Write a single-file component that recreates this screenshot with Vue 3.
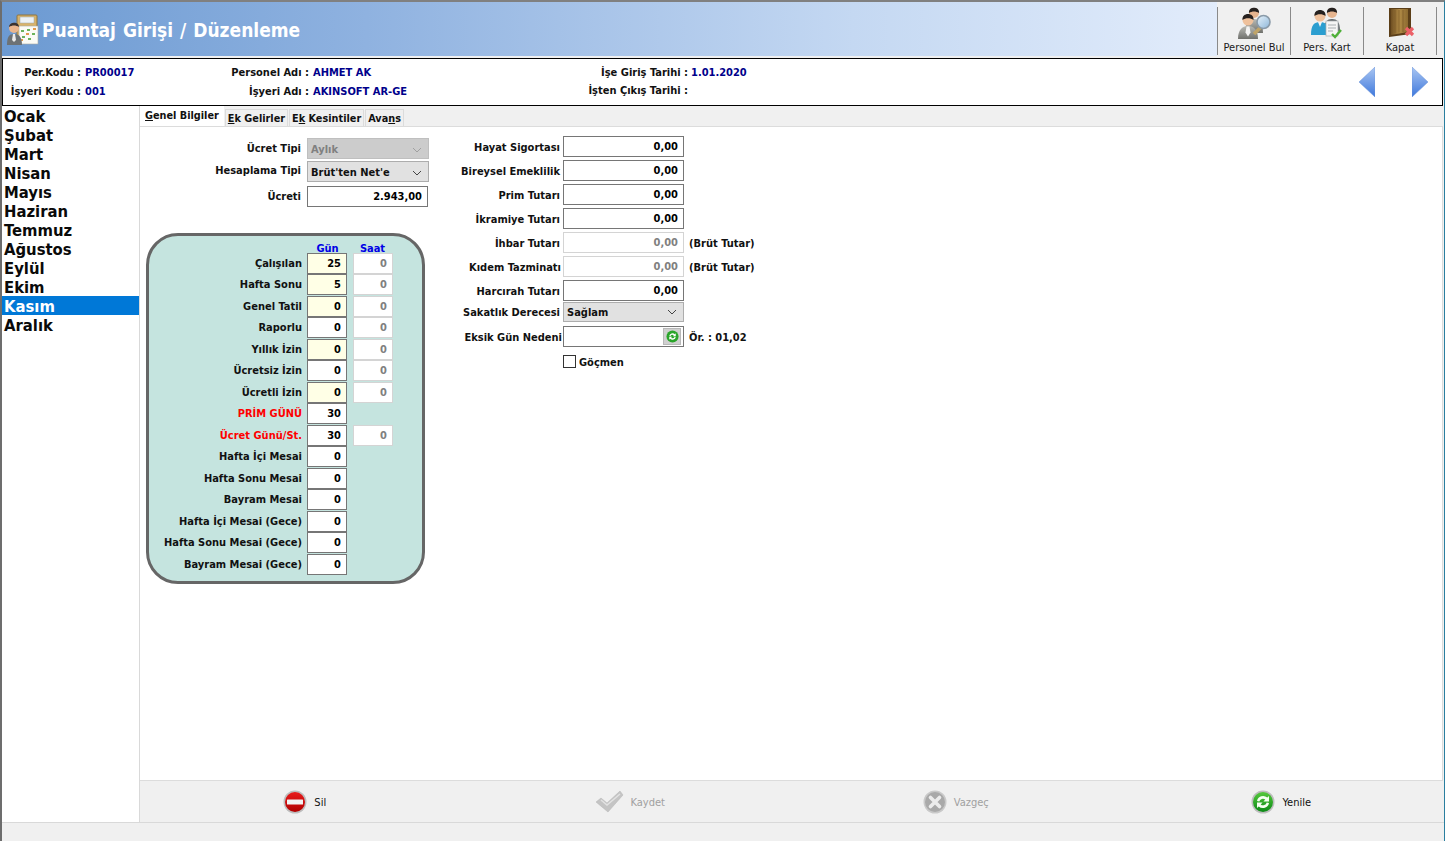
<template>
  <div class="window">
    <header class="titlebar">
      <div class="title-band">
        <svg class="title-icon" viewBox="0 0 32 32" width="32" height="32">
          <rect x="10" y="1" width="20" height="25" rx="1" fill="#d9b36a" stroke="#8d7440" />
          <rect x="13" y="3" width="14" height="6" fill="#eef2f5" stroke="#9aa6ad" stroke-width="0.5" />
          <rect x="12" y="12" width="19" height="18" fill="#fbfbf6" stroke="#a8a8a0" stroke-width="0.6" />
          <path d="M14 16h3v2h-3zM20 15h3v2h-3zM25 19h3v2h-3zM15 22h3v2h-3zM21 24h3v2h-3z" fill="#6cb35c" />
          <path d="M19 19h3v2h-3zM26 14h3v2h-3zM14 25h2v2h-2z" fill="#e39a4b" />
          <circle cx="7" cy="14" r="5" fill="#eab68e" />
          <path d="M2 13c0-5 10-6 10 0-3-2-7-2-10 0z" fill="#3a3230" />
          <path d="M0 31c0-8 2-11 7-11s8 3 8 11z" fill="#6d7275" />
          <path d="M6 20h2l1 6-2 2-2-2z" fill="#ececec" />
        </svg>
        <h1 class="title">Puantaj Girişi / Düzenleme</h1>
      </div>
      <div class="toolbar">
        <button class="tool">
          <svg viewBox="0 0 34 32" width="34" height="32">
            <defs>
              <linearGradient id="suitGray" x1="0" y1="0" x2="0" y2="1">
                <stop offset="0" stop-color="#b9bab5" />
                <stop offset="1" stop-color="#6f706c" />
              </linearGradient>
              <linearGradient id="lensFill" x1="0" y1="0" x2="1" y2="1">
                <stop offset="0" stop-color="#e8f3fb" />
                <stop offset="1" stop-color="#8db6d8" />
              </linearGradient>
            </defs>
            <circle cx="17" cy="6" r="5" fill="#e6b48e" />
            <path d="M12 6c-1-7 11-7 10 0-3-2-7-2-10 0z" fill="#26211f" />
            <path d="M8 26c0-10 4-14 9-14s9 4 9 14z" fill="url(#suitGray)" />
            <circle cx="11" cy="13" r="5.500" fill="#efc19c" />
            <path d="M5.500 13c-1-8 12-8 11 0-3-2.500-8-2.500-11 0z" fill="#26211f" />
            <path d="M1 32c0-9 4-13 10-13s10 4 10 13z" fill="url(#suitGray)" />
            <path d="M9.500 19.500h3l1 6-2.500 4-2.500-4z" fill="#f3f3f3" />
            <path d="M17 27l7-7" stroke="#c0a468" stroke-width="3.500" />
            <circle cx="26.500" cy="15" r="6.500" fill="url(#lensFill)" stroke="#8a9aa8" stroke-width="1.600" />
          </svg>
          <span>Personel Bul</span>
        </button>
        <button class="tool">
          <svg viewBox="0 0 32 32" width="32" height="32">
            <circle cx="21" cy="6" r="5" fill="#e6b48e" />
            <path d="M16 6c-1-7 11-7 10 0-3-2-7-2-10 0z" fill="#26211f" />
            <path d="M13 24c0-9 3-12 8-12s8 3 8 12z" fill="#62676a" />
            <circle cx="9" cy="9" r="5.500" fill="#efc19c" />
            <path d="M3.500 9c-1-8 12-8 11 0-3-2.500-8-2.500-11 0z" fill="#26211f" />
            <path d="M0 28c0-10 3-13 9-13s9 3 9 13z" fill="#2b9ed0" />
            <path d="M7 15h4l-2 5z" fill="#f3f3f3" />
            <rect x="15" y="14" width="12" height="15" fill="#f5f5f5" stroke="#aab0b3" stroke-width="0.700" />
            <path d="M17 18h8M17 21h8M17 24h5" stroke="#a9aeb1" />
            <path d="M21 27l3 3 6-7" stroke="#4eb038" stroke-width="2.400" fill="none" />
          </svg>
          <span>Pers. Kart</span>
        </button>
        <button class="tool">
          <svg viewBox="0 0 32 32" width="32" height="32">
            <defs>
              <linearGradient id="doorFill" x1="0" y1="0" x2="1" y2="0">
                <stop offset="0" stop-color="#6f4f22" />
                <stop offset="0.5" stop-color="#b08a45" />
                <stop offset="1" stop-color="#8c6a30" />
              </linearGradient>
            </defs>
            <path d="M5 1h22v26l-22 3z" fill="#5b3e18" />
            <path d="M7 2h17v23l-17 3z" fill="url(#doorFill)" />
            <path d="M11 3v23M15 3v22.500M19 3v22" stroke="#7d5a28" stroke-width="0.800" />
            <path d="M22 21l7 7M29 21l-7 7" stroke="#ec6168" stroke-width="3.200" />
          </svg>
          <span>Kapat</span>
        </button>
      </div>
    </header>

    <section class="info">
      <div class="info-grid">
        <div class="info-row">
          <span class="k k1">Per.Kodu :</span><span class="v v1">PR00017</span>
          <span class="k k2">Personel Adı :</span><span class="v v2">AHMET AK</span>
          <span class="k k3">İşe Giriş Tarihi :</span><span class="v v3">1.01.2020</span>
        </div>
        <div class="info-row">
          <span class="k k1">İşyeri Kodu :</span><span class="v v1">001</span>
          <span class="k k2">İşyeri Adı :</span><span class="v v2">AKINSOFT AR-GE</span>
          <span class="k k3 up">İşten Çıkış Tarihi :</span><span class="v v3"></span>
        </div>
      </div>
      <div class="nav-arrows">
        <svg viewBox="0 0 16 30" width="16" height="30">
          <defs>
            <linearGradient id="arrowFill" x1="0" y1="0" x2="0" y2="1">
              <stop offset="0" stop-color="#a9c6f2" />
              <stop offset="1" stop-color="#3f78dc" />
            </linearGradient>
          </defs>
          <path d="M16 0v30L0 15z" fill="url(#arrowFill)" stroke="#6d95d8" stroke-width="0.500" />
        </svg>
        <svg viewBox="0 0 16 30" width="16" height="30">
          <path d="M0 0v30L16 15z" fill="url(#arrowFill)" stroke="#6d95d8" stroke-width="0.500" />
        </svg>
      </div>
    </section>

    <div class="body">
      <ul class="months">
        <li v-for="m in months" :key="m" :class="{ selected: m === 'Kasım' }">{{ m }}</li>
      </ul>

      <main class="content">
        <div class="tabs">
          <div class="tab active"><u>G</u>enel Bilgiler</div>
          <div class="tab"><u>E</u>k Gelirler</div>
          <div class="tab">E<u>k</u> Kesintiler</div>
          <div class="tab">Ava<u>n</u>s</div>
        </div>

        <div class="panel">
          <div class="col-left">
            <div class="top-row level">
              <label>Ücret Tipi</label>
              <div class="select disabled"><span>Aylık</span><svg viewBox="0 0 10 6" width="10" height="6"><path d="M1 1l4 4 4-4" fill="none" stroke="#a0a0a0" /></svg></div>
            </div>
            <div class="top-row">
              <label>Hesaplama Tipi</label>
              <div class="select"><span>Brüt'ten Net'e</span><svg viewBox="0 0 10 6" width="10" height="6"><path d="M1 1l4 4 4-4" fill="none" stroke="#444" /></svg></div>
            </div>
            <div class="top-row level salary">
              <label>Ücreti</label>
              <div class="input wide">2.943,00</div>
            </div>

            <div class="days">
              <div class="days-head"><span>Gün</span><span>Saat</span></div>
              <div v-for="r in dayRows" :key="r.label" class="day-row">
                <label :class="{ red: r.red }">{{ r.label }}</label>
                <div class="input day" :class="{ yellow: r.yellow }">{{ r.days }}</div>
                <div v-if="r.hours !== undefined" class="input hour">{{ r.hours }}</div>
              </div>
            </div>
          </div>

          <div class="col-right">
            <div v-for="r in amountRows" :key="r.label" class="amount-row">
              <label :style="r.pad !== undefined ? { paddingRight: r.pad + 'px' } : null">{{ r.label }}</label>
              <div class="input amount" :class="{ off: r.off }">0,00</div>
              <span v-if="r.off" class="note">(Brüt Tutar)</span>
            </div>
            <div class="amount-row sakat">
              <label>Sakatlık Derecesi</label>
              <div class="select amount-select"><span>Sağlam</span><svg viewBox="0 0 10 6" width="10" height="6"><path d="M1 1l4 4 4-4" fill="none" stroke="#444" /></svg></div>
            </div>
            <div class="amount-row eksik">
              <label class="tight">Eksik Gün Nedeni</label>
              <div class="input amount lookup">
                <span class="lookup-btn">
                  <svg viewBox="0 0 14 14" width="13" height="13">
                    <circle cx="7" cy="7" r="6.500" fill="#2aa52a" />
                    <path d="M3.500 6.500a3.600 3.600 0 0 1 6-2l1-1v3.200H7.400l1-1a2.200 2.200 0 0 0-3.600 1zM10.500 7.500a3.600 3.600 0 0 1-6 2l-1 1V7.300h3.100l-1 1a2.200 2.200 0 0 0 3.600-1z" fill="#fff" />
                  </svg>
                </span>
              </div>
              <span class="note">Ör. : 01,02</span>
            </div>
            <div class="check-row">
              <span class="checkbox"></span>
              <span class="check-label">Göçmen</span>
            </div>
          </div>
        </div>

        <footer class="actions">
          <button class="action">
            <svg viewBox="0 0 24 24" width="24" height="24">
              <defs>
                <linearGradient id="redFill" x1="0" y1="0" x2="0" y2="1">
                  <stop offset="0" stop-color="#e81c1c" />
                  <stop offset="1" stop-color="#b00000" />
                </linearGradient>
                <linearGradient id="greenFill" x1="0" y1="0" x2="0" y2="1">
                  <stop offset="0" stop-color="#55c83c" />
                  <stop offset="1" stop-color="#0b8a16" />
                </linearGradient>
              </defs>
              <circle cx="12" cy="12" r="11.500" fill="#bdbdbd" />
              <circle cx="12" cy="12" r="10" fill="url(#redFill)" />
              <rect x="4" y="9.500" width="16" height="5" rx="0.500" fill="#f2f2f2" />
            </svg>
            <span>Sil</span>
          </button>
          <button class="action off">
            <svg viewBox="0 0 28 24" width="28" height="24">
              <path d="M0 12l5-4 6 5L24 1l3 4-15 17z" fill="#c4c4c4" stroke="#b4b4b4" stroke-width="0.500" />
              <path d="M5 10l6 5L24 4" fill="none" stroke="#e2e2e2" stroke-width="1.500" />
            </svg>
            <span>Kaydet</span>
          </button>
          <button class="action off">
            <svg viewBox="0 0 24 24" width="24" height="24">
              <circle cx="12" cy="12" r="11.500" fill="#c9c9c9" />
              <circle cx="12" cy="12" r="10" fill="#a9a9a9" />
              <path d="M7.500 7.500l9 9M16.500 7.500l-9 9" stroke="#ececec" stroke-width="3.600" stroke-linecap="round" />
            </svg>
            <span>Vazgeç</span>
          </button>
          <button class="action">
            <svg viewBox="0 0 24 24" width="24" height="24">
              <circle cx="12" cy="12" r="11.500" fill="#bdbdbd" />
              <circle cx="12" cy="12" r="10" fill="url(#greenFill)" />
              <path d="M6 11a6.200 6.200 0 0 1 10.300-3.400l1.700-1.700v5.600h-5.600l1.900-1.900a3.700 3.700 0 0 0-6 1.900zM18 13a6.200 6.200 0 0 1-10.300 3.400L6 18.100v-5.600h5.600l-1.900 1.900a3.700 3.700 0 0 0 6-1.900z" fill="#f4fff0" />
            </svg>
            <span>Yenile</span>
          </button>
        </footer>
      </main>
    </div>

    <div class="statusbar"></div>
  </div>
</template>

<script setup>
const months = ['Ocak', 'Şubat', 'Mart', 'Nisan', 'Mayıs', 'Haziran', 'Temmuz', 'Ağustos', 'Eylül', 'Ekim', 'Kasım', 'Aralık'];

const dayRows = [
  { label: 'Çalışılan', days: 25, hours: 0, yellow: true },
  { label: 'Hafta Sonu', days: 5, hours: 0, yellow: true },
  { label: 'Genel Tatil', days: 0, hours: 0, yellow: true },
  { label: 'Raporlu', days: 0, hours: 0 },
  { label: 'Yıllık İzin', days: 0, hours: 0, yellow: true },
  { label: 'Ücretsiz İzin', days: 0, hours: 0 },
  { label: 'Ücretli İzin', days: 0, hours: 0, yellow: true },
  { label: 'PRİM GÜNÜ', days: 30, red: true },
  { label: 'Ücret Günü/St.', days: 30, hours: 0, red: true },
  { label: 'Hafta İçi Mesai', days: 0 },
  { label: 'Hafta Sonu Mesai', days: 0 },
  { label: 'Bayram Mesai', days: 0 },
  { label: 'Hafta İçi Mesai (Gece)', days: 0 },
  { label: 'Hafta Sonu Mesai (Gece)', days: 0 },
  { label: 'Bayram Mesai (Gece)', days: 0 },
];

const amountRows = [
  { label: 'Hayat Sigortası' },
  { label: 'Bireysel Emeklilik' },
  { label: 'Prim Tutarı' },
  { label: 'İkramiye Tutarı' },
  { label: 'İhbar Tutarı', off: true },
  { label: 'Kıdem Tazminatı', off: true, pad: 2 },
  { label: 'Harcırah Tutarı' },
];
</script>

<style>
html, body {
  margin: 0;
  background: #fff;
  overflow: hidden;
}
</style>

<style scoped>
.window {
  width: 1445px;
  height: 841px;
  box-sizing: border-box;
  display: flex;
  flex-direction: column;
  border-top: 2px solid #808080;
  border-left: 2px solid #6d6d6d;
  border-right: 1px solid #2a7f9f;
  background: #f0f0f0;
  font-family: "DejaVu Sans Condensed", "DejaVu Sans", sans-serif;
  font-stretch: condensed;
  font-size: 11px;
  color: #000;
}

.titlebar {
  height: 54px;
  flex: none;
  display: flex;
  background: #f0f0f0;
}

.title-band {
  flex: 1;
  display: flex;
  align-items: center;
  padding: 2px 0 0 5px;
  box-sizing: border-box;
  background: linear-gradient(90deg, #6c9ad2 0%, #8fb2e0 30%, #c4d8f2 70%, #e2ecfb 100%);
}

.title-icon {
  flex: none;
}

.title {
  margin: 0 0 0 3px;
  font-size: 19px;
  font-weight: 700;
  color: #fff;
  white-space: nowrap;
  word-spacing: 1px;
}

.toolbar {
  flex: none;
  display: flex;
  height: 48px;
  align-self: center;
  margin-top: 4px;
  border-left: 1px solid #8a8a8a;
  margin-right: 7px;
}

.tool {
  width: 73px;
  box-sizing: border-box;
  border: 0;
  border-right: 1px solid #8a8a8a;
  padding: 0 0 1px;
  background: transparent;
  display: flex;
  flex-direction: column;
  align-items: center;
  justify-content: space-between;
  font-family: inherit;
  font-stretch: inherit;
  font-size: 11px;
  color: #1a1a1a;
}

.tool span {
  line-height: 13px;
}

.info {
  height: 48px;
  flex: none;
  box-sizing: border-box;
  width: 1441px;
  border: 1px solid #000;
  margin-top: 2px;
  background: #fff;
  display: flex;
  justify-content: space-between;
  align-items: center;
  font-weight: 700;
}

.info-grid {
  display: flex;
  flex-direction: column;
  gap: 4px;
}

.info-row {
  display: flex;
  height: 15px;
  line-height: 15px;
}

.k {
  text-align: right;
  white-space: nowrap;
  color: #111;
}

.k1 { width: 78px; flex: none; }
.k2 { width: 224px; flex: none; }
.k3 { width: 375px; flex: none; }
.k3.up { position: relative; top: -1px; }

.v {
  margin-left: 4px;
  color: #00008b;
  white-space: nowrap;
}

.v1, .v2 { width: 0; flex: none; }
.v3 { margin-left: 3px; }

.nav-arrows {
  display: flex;
  gap: 37px;
  margin-right: 14px;
}

.body {
  flex: 1;
  min-height: 0;
  display: flex;
  background: #fff;
}

.months {
  width: 137px;
  flex: none;
  margin: 0;
  padding: 0;
  list-style: none;
  background: #fff;
  font-size: 16.5px;
  font-weight: 700;
}

.months li {
  height: 19px;
  line-height: 21px;
  padding-left: 2px;
  color: #0a0a0a;
}

.months li.selected {
  background: #0078d7;
  color: #fff;
}

.content {
  flex: 1;
  min-width: 0;
  display: flex;
  flex-direction: column;
  background: #f0f0f0;
  border-left: 1px solid #d9d9d9;
}

.tabs {
  height: 20px;
  flex: none;
  display: flex;
  align-items: flex-end;
  background: #f0f0f0;
  font-size: 10.8px;
  font-weight: 700;
}

.tab {
  height: 17px;
  line-height: 17px;
  padding: 0 2px;
  margin-left: 1px;
  background: #f0f0f0;
  border: 1px solid #dcdcdc;
  border-bottom: 0;
  box-sizing: border-box;
  color: #111;
  white-space: nowrap;
}

.tab.active {
  height: 20px;
  line-height: 18px;
  margin-left: 0;
  padding: 0 4px;
  background: #fff;
  border-color: #fff;
}

.panel {
  flex: 1;
  min-height: 0;
  display: flex;
  margin-right: 1px;
  background: #fff;
  border: 1px solid #dcdcdc;
  border-left: 0;
  font-weight: 700;
}

.col-left {
  width: 286px;
  flex: none;
  padding: 11px 0 0 6px;
  box-sizing: border-box;
}

label {
  flex: none;
  text-align: right;
  white-space: nowrap;
  color: #111;
}

.top-row {
  display: flex;
  align-items: center;
  height: 21px;
  margin-bottom: 2px;
}

.top-row label {
  width: 161px;
  padding-right: 6px;
  box-sizing: border-box;
  position: relative;
  top: -1px;
}

.top-row.level label {
  top: 0;
}

.top-row .select {
  padding-top: 2px;
}

.top-row.salary {
  margin-top: 4px;
}

.select {
  flex: none;
  display: flex;
  align-items: center;
  justify-content: space-between;
  box-sizing: border-box;
  width: 122px;
  height: 21px;
  padding: 0 3px;
  background: #e1e1e1;
  border: 1px solid #adadad;
  color: #111;
}

.select svg {
  margin-right: 3px;
}

.select.disabled {
  background: #cccccc;
  border-color: #bfbfbf;
  color: #808080;
}

.input {
  flex: none;
  box-sizing: border-box;
  display: flex;
  align-items: center;
  justify-content: flex-end;
  background: #fff;
  border: 1px solid #767676;
  color: #000;
  height: 21px;
}

.input.wide {
  width: 121px;
  padding-right: 5px;
}

.days {
  width: 279px;
  height: 351px;
  box-sizing: border-box;
  margin-top: 26px;
  border: 3px solid #666;
  border-radius: 32px;
  background: #c5e4df;
  padding: 7px 0 0;
}

.days-head {
  display: flex;
  height: 9.5px;
  line-height: 12px;
  margin-left: 156px;
  color: #0000e6;
}

.days-head span {
  width: 45px;
  text-align: center;
}

.day-row {
  display: flex;
  align-items: center;
  height: 21.5px;
}

.day-row label {
  width: 158px;
  padding-right: 5px;
  box-sizing: border-box;
}

.day-row label.red {
  color: #f00;
}

.day {
  width: 40px;
  padding-right: 5px;
}

.day.yellow {
  background: #ffffe6;
}

.hour {
  width: 40px;
  margin-left: 6px;
  padding-right: 5px;
  border-color: #d4d4d4;
  color: #808080;
}

.col-right {
  padding-top: 9px;
  margin-left: 25px;
}

.amount-row {
  display: flex;
  align-items: center;
  height: 21px;
  margin-bottom: 3px;
}

.amount-row label {
  width: 112px;
  padding-right: 3px;
  padding-top: 2px;
  box-sizing: border-box;
}

.amount-row label.tight {
  padding-right: 1px;
}

.amount {
  width: 121px;
  padding-right: 5px;
}

.amount.off {
  border-color: #d4d4d4;
  color: #808080;
}

.note {
  margin-left: 5px;
  padding-top: 2px;
  color: #111;
  white-space: nowrap;
}

.amount-row.sakat {
  height: 20px;
  margin-top: -2px;
  margin-bottom: 4px;
}

.amount-row.sakat label {
  padding-top: 0;
}

.amount-select {
  width: 121px;
  height: 20px;
}

.lookup {
  padding-right: 2px;
}

.lookup-btn {
  width: 18px;
  height: 17px;
  display: flex;
  align-items: center;
  justify-content: center;
  background: #d0d0d0;
  border: 1px solid #b8b8b8;
  box-sizing: border-box;
}

.check-row {
  display: flex;
  align-items: center;
  margin: 8px 0 0 112px;
  height: 13px;
}

.checkbox {
  width: 13px;
  height: 13px;
  box-sizing: border-box;
  border: 1px solid #333;
  background: #fff;
}

.check-label {
  margin-left: 3px;
  padding-top: 1px;
  color: #111;
}

.actions {
  height: 41px;
  flex: none;
  box-sizing: border-box;
  padding-left: 2px;
  display: grid;
  grid-template-columns: repeat(4, 1fr);
  background: #f0f0f0;
}

.action {
  border: 0;
  padding: 1px 0 0;
  background: transparent;
  display: flex;
  align-items: center;
  justify-content: center;
  gap: 7px;
  font-family: inherit;
  font-stretch: inherit;
  font-size: 11px;
  color: #111;
}

.action.off {
  color: #a0a0a0;
}

.statusbar {
  height: 19px;
  flex: none;
  box-sizing: border-box;
  border-top: 1px solid #d9d9d9;
  background: #f0f0f0;
}
</style>
